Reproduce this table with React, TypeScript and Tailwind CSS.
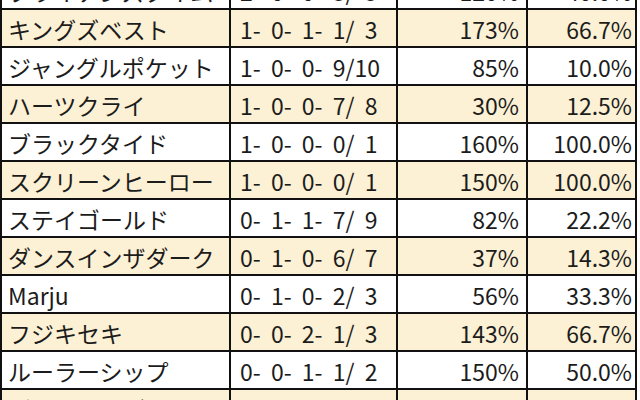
const rows = [
  { name: "ブライアンズタイム", rec: "2- 0- 0- 3/ 5", a: "120%", b: "40.0%" },
  { name: "キングズベスト", rec: "1- 0- 1- 1/ 3", a: "173%", b: "66.7%" },
  { name: "ジャングルポケット", rec: "1- 0- 0- 9/10", a: "85%", b: "10.0%" },
  { name: "ハーツクライ", rec: "1- 0- 0- 7/ 8", a: "30%", b: "12.5%" },
  { name: "ブラックタイド", rec: "1- 0- 0- 0/ 1", a: "160%", b: "100.0%" },
  { name: "スクリーンヒーロー", rec: "1- 0- 0- 0/ 1", a: "150%", b: "100.0%" },
  { name: "ステイゴールド", rec: "0- 1- 1- 7/ 9", a: "82%", b: "22.2%" },
  { name: "ダンスインザダーク", rec: "0- 1- 0- 6/ 7", a: "37%", b: "14.3%" },
  { name: "Marju", rec: "0- 1- 0- 2/ 3", a: "56%", b: "33.3%" },
  { name: "フジキセキ", rec: "0- 0- 2- 1/ 3", a: "143%", b: "66.7%" },
  { name: "ルーラーシップ", rec: "0- 0- 1- 1/ 2", a: "150%", b: "50.0%" },
  { name: "グラスワンダー", rec: "0- 0- 1- 2/ 3", a: "110%", b: "33.3%" },
];

export default function App() {
  return (
    <div
      className="w-[640px] h-[400px] overflow-hidden bg-white text-[#1c1c1c]"
      style={{ fontFamily: '"Noto Sans CJK JP", "Noto Sans", sans-serif' }}
    >
      <div className="mt-[-28px] w-[637px]">
        {rows.map((r, i) => (
          <div
            key={i}
            className={`grid grid-cols-[229px_167px_130px_109px] h-[38px] border-l-2 border-b-2 border-[#111] text-[23px] leading-none ${
              i % 2 === 1 ? "bg-[#fcf1d4]" : "bg-white"
            }`}
          >
            <div className="flex items-center pl-[6px] pt-[2px] border-r-2 border-[#111] whitespace-nowrap overflow-hidden">
              {r.name}
            </div>
            <div className="flex items-center pl-[9px] pt-[2px] border-r-2 border-[#111] whitespace-pre [word-spacing:5px]">
              {r.rec}
            </div>
            <div className="flex items-center justify-end pr-[7px] pt-[2px] border-r-2 border-[#111]">
              {r.a}
            </div>
            <div className="flex items-center justify-end pr-[3px] pt-[2px] border-r-2 border-[#111]">
              {r.b}
            </div>
          </div>
        ))}
      </div>
    </div>
  );
}
